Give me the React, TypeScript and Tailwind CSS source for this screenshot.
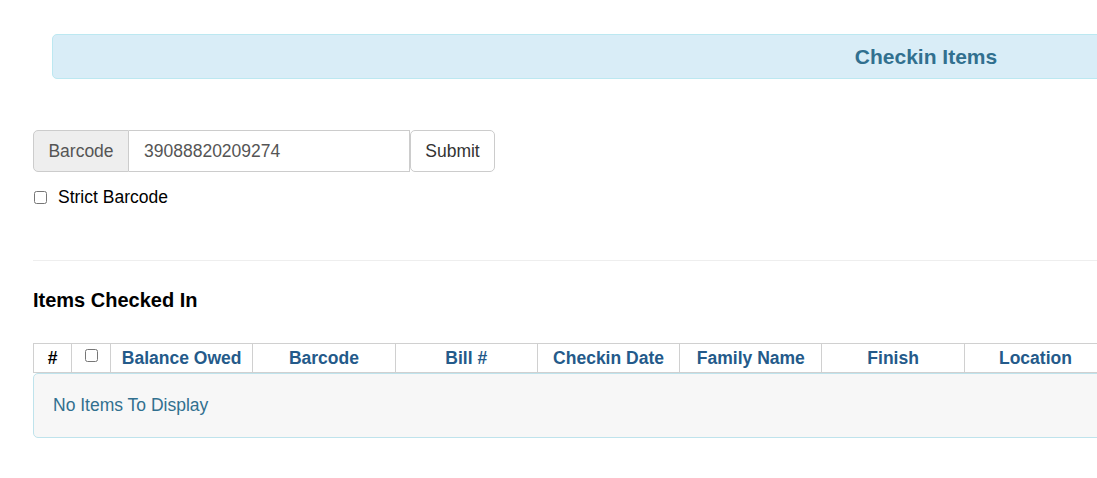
import React from "react";

const cols = [
  "Balance Owed",
  "Barcode",
  "Bill #",
  "Checkin Date",
  "Family Name",
  "Finish",
  "Location",
  "Patron",
  "Price",
  "Status",
  "Title",
  "Type",
];

export default function App() {
  return (
    <div className="w-[1097px] h-[478px] overflow-hidden bg-white font-['Liberation_Sans',Arial,sans-serif] text-[17.5px] text-[#333]">
      <div className="w-[1786px] ml-[33px]">
        <div className="pt-[34px] px-[19px]">
          <div className="h-[45px] rounded-[5px] border border-[#bce8f1] bg-[#d9edf7] flex items-center justify-center text-[21px] font-bold text-[#31708f]">
            Checkin Items
          </div>
        </div>

        <div className="mt-[51px] flex h-[42px]">
          <div className="w-[96px] flex items-center justify-center bg-[#eeeeee] border border-[#ccc] rounded-l-[5px] text-[#555]">
            Barcode
          </div>
          <div className="w-[281px] flex items-center pl-[15px] border-y border-r border-[#ccc] text-[#555]">
            39088820209274
          </div>
          <button className="w-[85px] flex items-center justify-center border border-[#ccc] rounded-[5px] bg-white text-[#333]">
            Submit
          </button>
        </div>

        <div className="mt-[15px] h-[20px] flex items-center">
          <input type="checkbox" className="ml-px w-[13px] h-[13px]" />
          <span className="ml-[11px] text-black">Strict Barcode</span>
        </div>

        <div className="mt-[53px] border-t border-[#eee]" />

        <div className="mt-[27px] h-[24px] flex items-center text-[20px] font-bold text-black">
          Items Checked In
        </div>

        <div className="mt-[31px] grid grid-cols-[38px_39px_repeat(12,142.3px)] border-t border-l border-[#d0d0d0] h-[30px]">
          <div className="flex items-center justify-center border-r border-b border-[#d0d0d0] font-bold text-black">
            #
          </div>
          <div className="flex items-start justify-center pt-[5px] border-r border-b border-[#d0d0d0]">
            <input type="checkbox" className="w-[13px] h-[13px]" />
          </div>
          {cols.map((c) => (
            <div
              key={c}
              className="flex items-center justify-center border-r border-b border-[#d0d0d0] font-bold text-[#245a8a]"
            >
              {c}
            </div>
          ))}
        </div>

        <div className="h-[65px] w-[1786px] flex items-center pl-[19px] bg-[#f7f7f7] border border-[#bfe3ec] rounded-[5px] text-[#31708f]">
          No Items To Display
        </div>
      </div>
    </div>
  );
}
